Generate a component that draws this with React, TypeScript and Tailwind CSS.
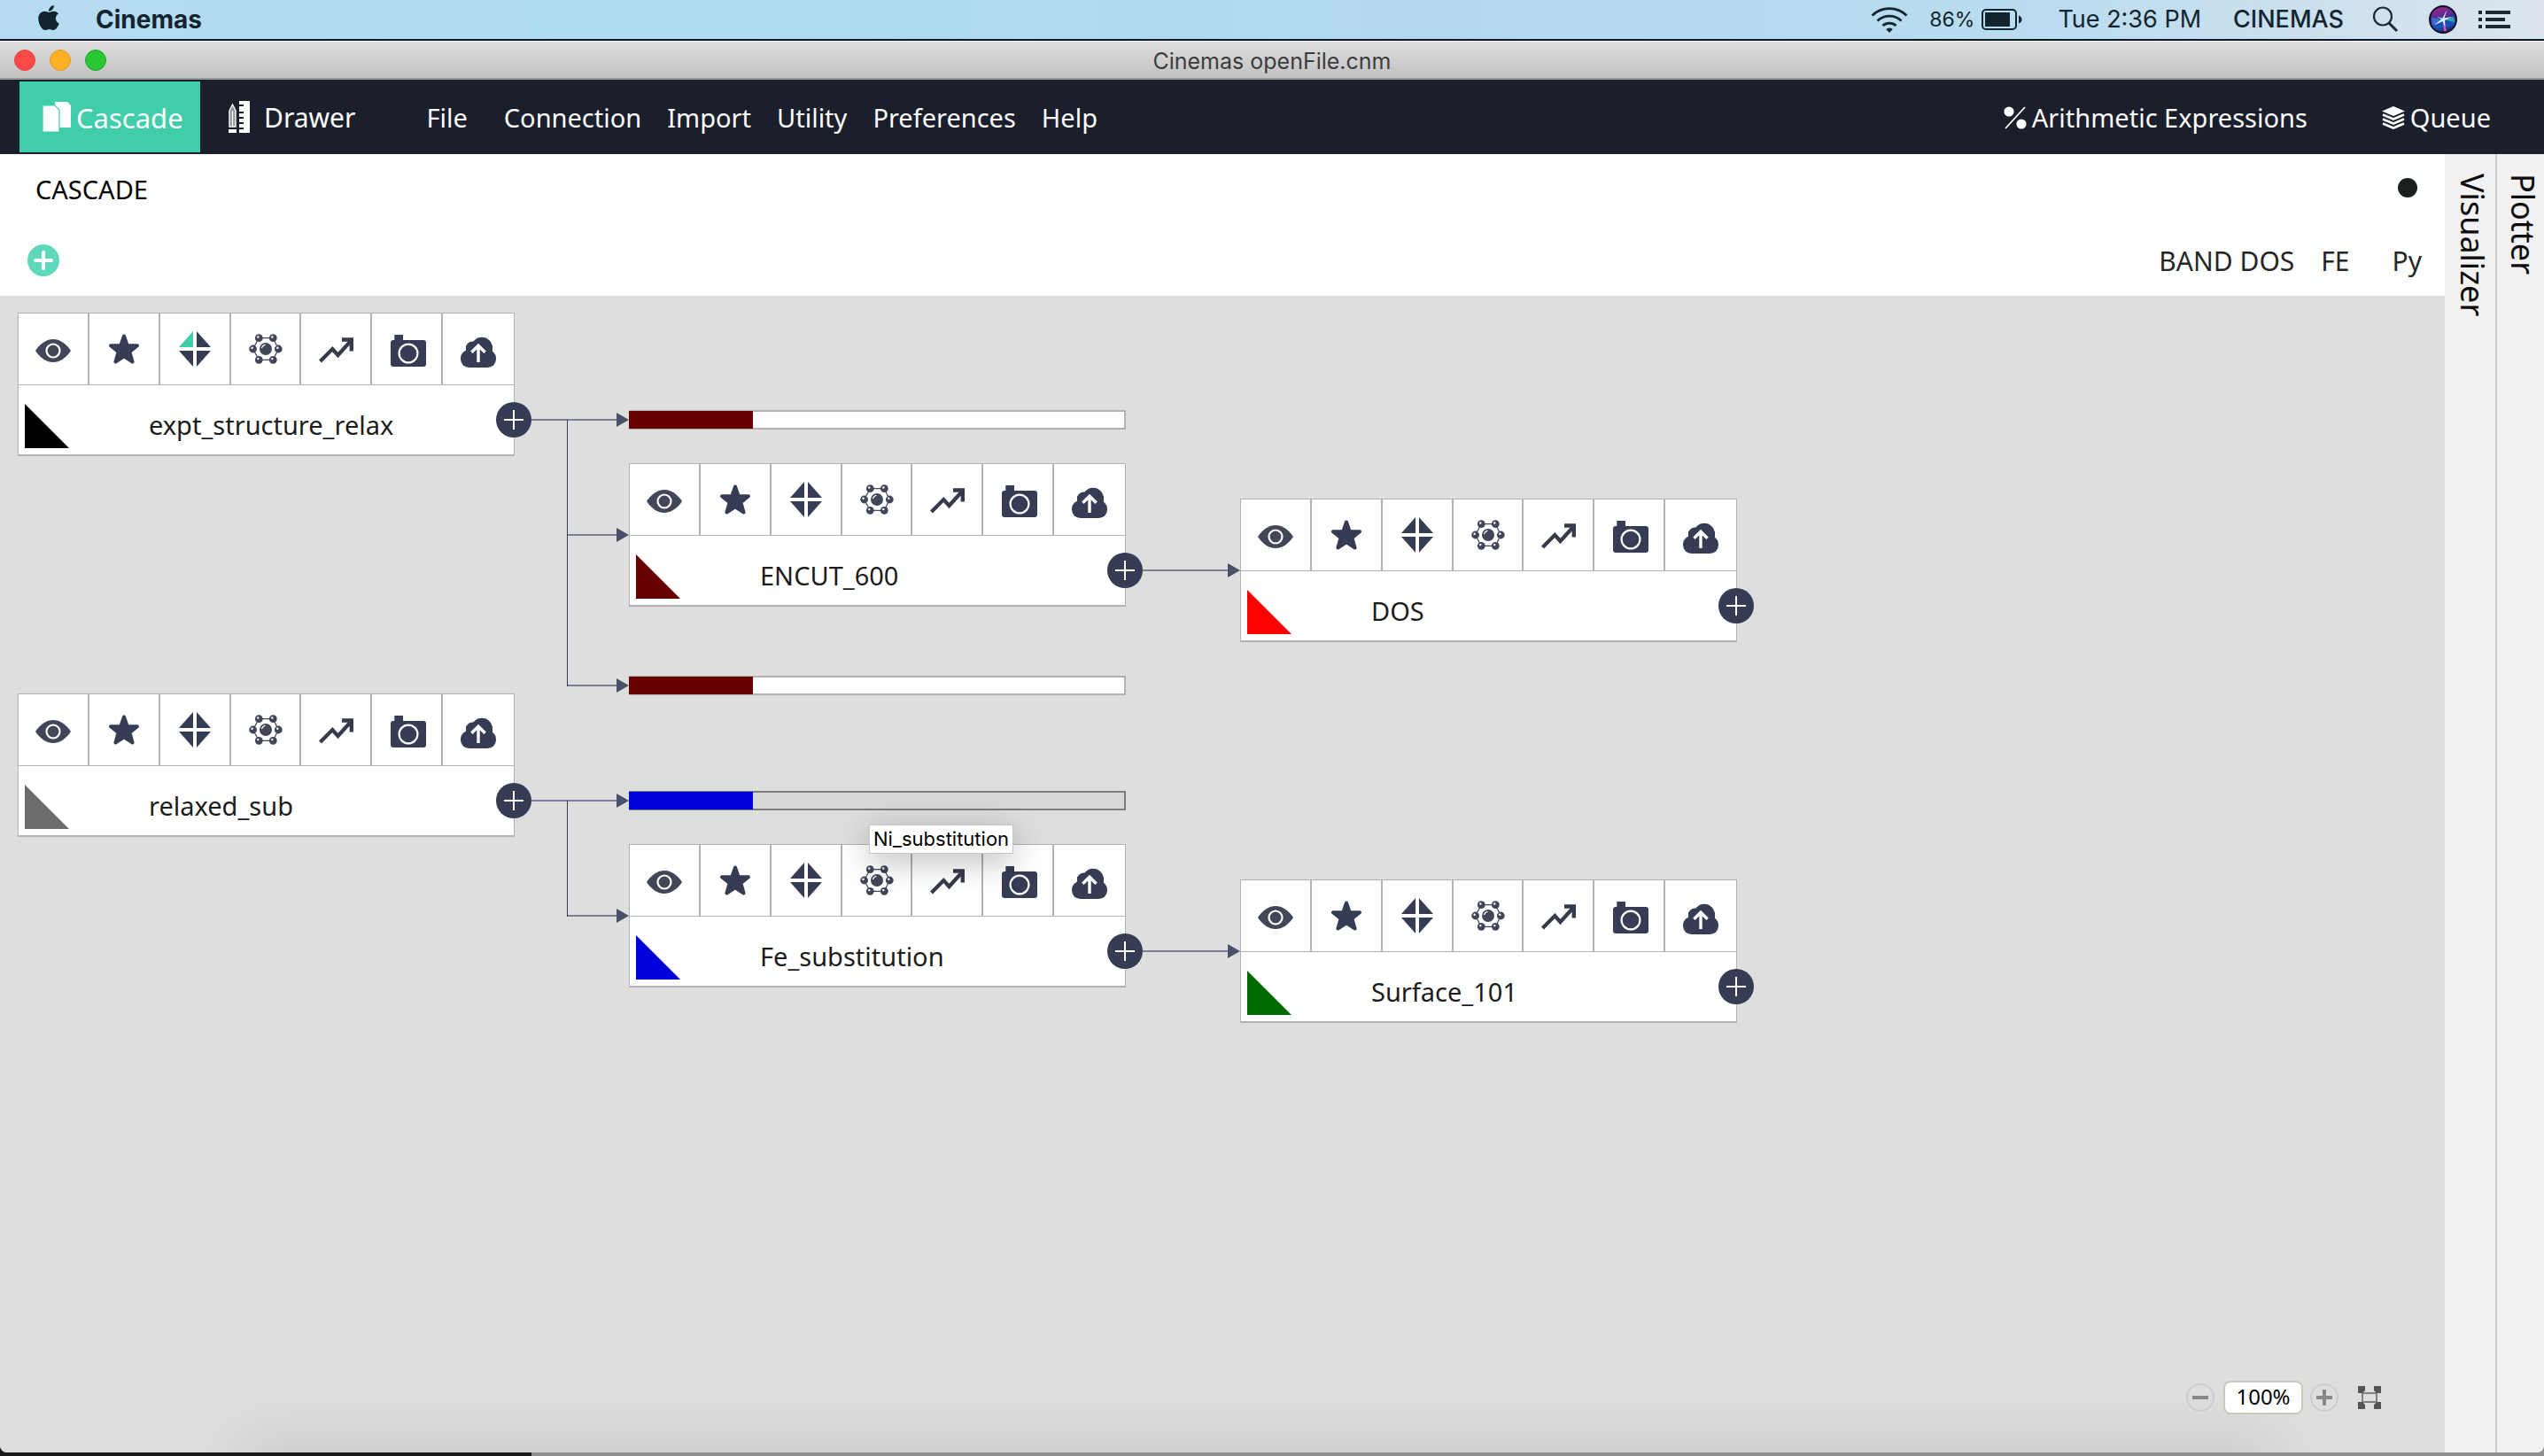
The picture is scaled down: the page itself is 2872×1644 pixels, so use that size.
import { useState } from "react";
import type { ReactNode } from "react";
import { FaApple } from "react-icons/fa";

const INK = "#373c55";

function EyeIcon() {
  return (
    <svg viewBox="0 0 80 80" className="size-full" aria-hidden="true">
      <path d="M20 42C26 33 33 29 40 29s14 4 20 13c-6 9-13 13-20 13S26 51 20 42Z" fill="#424659" />
      <circle cx="40" cy="42" r="7.5" fill="none" stroke="#fff" strokeWidth="2.2" />
    </svg>
  );
}

function StarIcon() {
  return (
    <svg viewBox="0 0 80 80" className="size-full" aria-hidden="true">
      <path
        d="M40 25.5 43.8 36.3 55 36.3 46.4 43.2 49.6 54.5 40 48.4 30.4 54.5 33.6 43.2 25 36.3 36.2 36.3Z"
        fill={INK}
        stroke={INK}
        strokeWidth="4"
        strokeLinejoin="round"
      />
    </svg>
  );
}

function DiamondIcon({ active }: { active?: boolean }) {
  return (
    <svg viewBox="0 0 80 80" className="size-full" aria-hidden="true">
      <path d="M38 20V38H22Z" fill={active ? "#40cdaa" : INK} />
      <path d="M42 20 58 38H42ZM22 42H38V60ZM42 42H58L42 60Z" fill={INK} />
    </svg>
  );
}

const atoms = [
  [32.3, 27.7],
  [48.3, 27.7],
  [54.3, 40],
  [48.3, 52.3],
  [32.3, 52.3],
  [25.6, 40],
];

function MoleculeIcon() {
  return (
    <svg viewBox="0 0 80 80" className="size-full" aria-hidden="true">
      <path d="M32.3 27.7H48.3L54.3 40 48.3 52.3H32.3L25.6 40Z" fill="none" stroke="#424659" strokeWidth="1.2" />
      <circle cx="40" cy="40" r="7" fill="#424659" />
      <path d="M35.6 38.6q1-2.6 3.4-3.2" stroke="#fff" strokeWidth="1.3" fill="none" strokeLinecap="round" />
      {atoms.map(([x, y]) => (
        <g key={`${x}-${y}`}>
          <circle cx={x} cy={y} r="4.4" fill="#424659" />
          <circle cx={x - 1} cy={y - 1.2} r="1.2" fill="#fff" />
        </g>
      ))}
    </svg>
  );
}

function TrendIcon() {
  return (
    <svg viewBox="0 0 80 80" className="size-full" aria-hidden="true">
      <path d="M22.5 54 36.3 40 42.5 47 57 31" fill="none" stroke="#363a4b" strokeWidth="4.2" />
      <path d="M47 27.3H60V42.6H55.6V31.8H47Z" fill="#363a4b" />
    </svg>
  );
}

function CameraIcon() {
  return (
    <svg viewBox="0 0 80 80" className="size-full" aria-hidden="true">
      <path d="M26.3 24H36V32H26.3Z" fill={INK} />
      <rect x="22" y="30" width="40" height="30" rx="3" fill={INK} />
      <circle cx="42" cy="45" r="10.4" fill="none" stroke="#fff" strokeWidth="2.2" />
    </svg>
  );
}

function CloudIcon() {
  return (
    <svg viewBox="0 0 80 80" className="size-full" aria-hidden="true">
      <rect x="20" y="41" width="40" height="20" rx="9.5" fill={INK} />
      <circle cx="33.5" cy="39" r="7.6" fill={INK} />
      <circle cx="44" cy="38.5" r="11.8" fill={INK} />
      <path d="M26 36H56V50H26Z" fill={INK} />
      <path d="M40 55V37M32.4 43.8 40 36.2 47.6 43.8" fill="none" stroke="#fff" strokeWidth="3.4" />
    </svg>
  );
}

function FilesIcon() {
  return (
    <svg viewBox="0 0 32 34" className="h-[34px] w-8" aria-hidden="true">
      <path d="M14 0H28L32 4V29H14Z" fill="#fff" />
      <path d="M0 4H14L19 9V34H0Z" fill="#fff" stroke="#40cdaa" strokeWidth="1.2" />
    </svg>
  );
}

function DrawerIcon() {
  return (
    <svg viewBox="0 0 24 36" className="h-9 w-6" aria-hidden="true">
      <path d="M12 0H24V36H12V32H17V30H12V26H17V24H12V20H17V18H12V14H17V12H12V6H17V4H12Z" fill="#fff" />
      <path d="M1 11 4.5 4 8 11V29H1Z" fill="#8d8f99" stroke="#fff" strokeWidth="1.4" />
      <path d="M4.5 11V28" stroke="#fff" strokeWidth="1.4" />
      <path d="M0 32H9V36H0Z" fill="#fff" />
    </svg>
  );
}

function PercentIcon() {
  return (
    <svg viewBox="0 0 26 26" className="size-[26px]" aria-hidden="true">
      <circle cx="6" cy="6" r="5.6" fill="#fff" />
      <circle cx="20" cy="20" r="5.6" fill="#fff" />
      <path d="M24 1 2 25" stroke="#fff" strokeWidth="1.8" />
    </svg>
  );
}

function LayersIcon() {
  return (
    <svg viewBox="0 0 26 26" className="size-[26px]" aria-hidden="true">
      <path d="M13 0 26 5.5 13 11 0 5.5Z" fill="#fff" />
      <path d="M1 9.5 13 14.5 25 9.5M1 14.5 13 19.5 25 14.5M1 19.5 13 24.5 25 19.5" fill="none" stroke="#fff" strokeWidth="2.6" />
    </svg>
  );
}

function WifiIcon() {
  return (
    <svg viewBox="0 0 42 30" className="h-[30px] w-[42px]" aria-hidden="true">
      <g fill="none" stroke="#12252f" strokeWidth="2.8">
        <path d="M1.5 10.5A28 28 0 0 1 40.5 10.5" />
        <path d="M7.5 16.5A19.5 19.5 0 0 1 34.5 16.5" />
        <path d="M13.5 22A11 11 0 0 1 28.5 22" />
      </g>
      <path d="M21 30 17.2 26A5.4 5.4 0 0 1 24.8 26Z" fill="#12252f" />
    </svg>
  );
}

function BatteryIcon() {
  return (
    <svg viewBox="0 0 46 24" className="h-6 w-[46px]" aria-hidden="true">
      <rect x="1" y="1" width="38" height="22" rx="4" fill="none" stroke="#12252f" strokeWidth="2" />
      <rect x="4" y="4" width="28" height="16" fill="#12252f" />
      <path d="M42 7.5Q45.5 9 45.5 12T42 16.5Z" fill="#12252f" />
    </svg>
  );
}

function SearchIcon() {
  return (
    <svg viewBox="0 0 30 30" className="size-[30px]" aria-hidden="true">
      <circle cx="12" cy="11.5" r="10" fill="none" stroke="#1c2a33" strokeWidth="2.2" />
      <path d="M19 19 28 28" stroke="#1c2a33" strokeWidth="3" />
    </svg>
  );
}

function AssistantIcon() {
  return (
    <svg viewBox="0 0 32 32" className="size-8" aria-hidden="true">
      <defs>
        <linearGradient id="orb" x1="0.3" y1="0" x2="0.6" y2="1">
          <stop offset="0" stopColor="#a6258f" />
          <stop offset="0.45" stopColor="#4a2c94" />
          <stop offset="0.75" stopColor="#1455c0" />
          <stop offset="1" stopColor="#2a1150" />
        </linearGradient>
      </defs>
      <circle cx="16" cy="16" r="15" fill="url(#orb)" stroke="#0c1024" strokeWidth="2" />
      <path d="M16 16 28 13 29 19Z" fill="#2fd0b4" opacity="0.7" />
      <path d="M16 16 20 29 17 29Z" fill="#f04fb0" />
      <path d="M3 14 16 16 4 23Z" fill="#2f8cf0" opacity="0.7" />
      <path d="M20.5 5 17.5 14.5 26 13 18 16.8 18.5 25 15.5 18 6 22.5 14.5 15.5 9 13 15.5 14.5Z" fill="#d9fbff" />
    </svg>
  );
}

function ListIcon() {
  return (
    <svg viewBox="0 0 36 20" className="h-5 w-9" aria-hidden="true">
      <path d="M0 0H4V4H0ZM8 0H36V4H8ZM0 8H4V12H0ZM8 8H30V12H8ZM0 16H4V20H0ZM8 16H36V20H8Z" fill="#1c2a33" />
    </svg>
  );
}

function FitIcon() {
  return (
    <svg viewBox="0 0 26 26" className="size-[26px]" aria-hidden="true">
      <path d="M5 8H21M5 18H21M5 5V21M21 5V21" fill="none" stroke="#808080" strokeWidth="2" />
      <path d="M0 0H8V5L5 8H0ZM26 0V8H21L18 5V0ZM0 26V18H5L8 21V26ZM26 26H18V21L21 18H26Z" fill="#545454" />
    </svg>
  );
}

function PlusBadge() {
  return (
    <svg viewBox="0 0 40 40" className="size-full" aria-hidden="true">
      <circle cx="20" cy="20" r="20" fill={INK} />
      <path d="M9 20H31M20 9V31" stroke="#fff" strokeWidth="2" />
    </svg>
  );
}

type NodeProps = { name: string; color: string; place: string; active?: boolean };

function NodeCard({ name, color, place, active }: NodeProps) {
  const tools: [string, ReactNode][] = [
    ["View", <EyeIcon />],
    ["Favourite", <StarIcon />],
    ["Cell", <DiamondIcon active={active} />],
    ["Structure", <MoleculeIcon />],
    ["Plot", <TrendIcon />],
    ["Snapshot", <CameraIcon />],
    ["Upload", <CloudIcon />],
  ];
  return (
    <article className={`absolute w-[561px] border border-b-2 border-[#b1b3b3] bg-white ${place}`}>
      <div className="grid grid-cols-7 divide-x-2 divide-[#b1b3b3] border-b border-[#b1b3b3]">
        {tools.map(([label, icon]) => (
          <button key={label} aria-label={`${label} ${name}`} className="flex h-20 justify-center">
            <span className="size-20 shrink-0">{icon}</span>
          </button>
        ))}
      </div>
      <div className="flex h-[78px] items-end gap-[90px] pb-[7px] pl-[7px]">
        <svg viewBox="0 0 50 50" className="size-[50px]" aria-hidden="true">
          <path d="M0 0 50 50H0Z" fill={color} />
        </svg>
        <h2 className="pb-[6px] text-[29px] leading-10 text-[#1c1c1c]">{name}</h2>
      </div>
      <button aria-label={`Add step after ${name}`} className="absolute -right-5 top-[100px] size-10">
        <PlusBadge />
      </button>
    </article>
  );
}

type BarProps = { name: string; place: string; fill: string; hovered?: boolean };

function CollapsedNode({ name, place, fill, hovered }: BarProps) {
  return (
    <button
      aria-label={name}
      className={`absolute flex h-[22px] w-[561px] border-y-2 border-r-2 ${
        hovered ? "border-[#7d7d7d] bg-[#d8d8d8]" : "border-[#b1b3b3] bg-white"
      } ${place}`}
    >
      <span className={`-my-px h-5 w-1/4 ${fill}`} />
    </button>
  );
}

function Connectors() {
  const arrows = [
    [600, 474, 710],
    [640, 604, 710],
    [640, 774, 710],
    [600, 904, 710],
    [640, 1034, 710],
    [1290, 644, 1400],
    [1290, 1074, 1400],
  ];
  return (
    <svg viewBox="0 334 1400 800" className="absolute left-0 top-0 h-[800px] w-[1400px]" aria-hidden="true">
      {arrows.map(([x1, y, x2]) => (
        <g key={`${x1}-${y}`}>
          <path d={`M${x1} ${y}H${x2 - 12}`} stroke="#7c8096" strokeWidth="2" />
          <path d={`M${x2 - 14} ${y - 8}L${x2} ${y}L${x2 - 14} ${y + 8}Z`} fill="#4b5069" />
        </g>
      ))}
      <path d="M640.5 474V775M640.5 904V1035" stroke="#373c55" strokeWidth="1" />
    </svg>
  );
}

const menus = ["Connection", "Import", "Utility", "Preferences", "Help"];

export default function App() {
  const [zoom, setZoom] = useState("100%");
  return (
    <div className="flex min-h-screen flex-col bg-[linear-gradient(to_right,#18191a_600px,#8f8f8f_600px)] font-['Noto_Sans',sans-serif] text-[29px] leading-9">
      <header className="flex h-[46px] items-center border-b-2 border-[#0b1722] bg-[linear-gradient(to_right,#b6dcf1,#addbf0_30%,#b3d8ef_60%,#b9dcf0_80%,#dbe4ec)] pl-[42px] pr-[38px] font-['Inter',sans-serif] text-[#12252f]">
        <FaApple className="-mt-1 h-8 w-[26px]" />
        <strong className="ml-10 text-[28px] font-bold">Cinemas</strong>
        <div className="ml-auto flex items-center text-[27px]">
          <WifiIcon />
          <span className="ml-6 text-[23px]">86%</span>
          <span className="ml-2">
            <BatteryIcon />
          </span>
          <span className="ml-10">Tue 2:36 PM</span>
          <span className="ml-9 font-medium">CINEMAS</span>
          <span className="ml-8">
            <SearchIcon />
          </span>
          <span className="ml-[34px]">
            <AssistantIcon />
          </span>
          <span className="ml-6">
            <ListIcon />
          </span>
        </div>
      </header>

      <div className="mb-1 flex flex-1 flex-col overflow-hidden rounded-b-lg bg-[#dedede]">
        <div className="grid h-11 grid-cols-[1fr_auto_1fr] items-center border-b-2 border-t border-b-[#979997] border-t-[#f3f3f3] bg-linear-to-b from-[#dedede] to-[#c2c2c2] px-4">
          <div className="flex gap-4">
            <button aria-label="Close" className="size-6 rounded-full border border-[#e0433f] bg-[#fc4a48]" />
            <button aria-label="Minimize" className="size-6 rounded-full border border-[#dd9a22] bg-[#fdb125]" />
            <button aria-label="Full screen" className="size-6 rounded-full border border-[#1ea62b] bg-[#29c732]" />
          </div>
          <h1 className="pt-[2px] font-['Inter',sans-serif] text-[25px] text-[#3c3c3c]">Cinemas openFile.cnm</h1>
        </div>

        <nav className="flex h-[84px] items-center bg-[#1b1e2b] pl-[22px] pr-[60px] text-white">
          <button className="flex h-20 w-[204px] items-center gap-[6px] bg-[#40cdaa] pl-[26px] text-[31px]">
            <FilesIcon />
            <span className="pt-px">Cascade</span>
          </button>
          <button className="ml-8 flex items-center gap-4 text-[30px]">
            <DrawerIcon />
            <span className="pt-px">Drawer</span>
          </button>
          <div className="ml-20 flex gap-[29px] pt-px text-shadow-[0_2px_1px_rgba(255,255,255,0.35)]">
            <button className="mr-3">File</button>
            {menus.map((m) => (
              <button key={m}>{m}</button>
            ))}
          </div>
          <div className="ml-auto flex gap-[84px] pt-px text-shadow-[0_2px_1px_rgba(255,255,255,0.35)]">
            <button className="flex items-center gap-[6px]">
              <PercentIcon />
              Arithmetic Expressions
            </button>
            <button className="flex items-center gap-[6px]">
              <LayersIcon />
              Queue
            </button>
          </div>
        </nav>

        <div className="flex flex-1">
          <main className="flex flex-1 flex-col">
            <section className="flex h-40 flex-col justify-between bg-white pb-5 pl-[31px] pr-[26px] pt-5">
              <div className="flex h-10 items-center justify-between pl-[9px] pr-[5px]">
                <h2 className="text-black">CASCADE</h2>
                <button aria-label="Status" className="mb-1 size-[22px] rounded-full bg-[#1b1f20]" />
              </div>
              <div className="flex h-10 items-center">
                <button aria-label="Add structure" className="size-9">
                  <svg viewBox="0 0 36 36" className="size-full" aria-hidden="true">
                    <circle cx="18" cy="18" r="18" fill="#5ed7bb" />
                    <path d="M9 18H27M18 9V27" stroke="#fff" strokeWidth="4" strokeLinecap="round" />
                  </svg>
                </button>
                <div className="ml-auto flex pt-px text-[30px] text-[#262626]">
                  <button>BAND DOS</button>
                  <button className="ml-[30px]">FE</button>
                  <button className="ml-12">Py</button>
                </div>
              </div>
            </section>

            <section className="relative flex flex-1 flex-col justify-end overflow-hidden bg-[#dedede]">
              <div className="absolute inset-x-0 -bottom-10 ml-[280px] mr-[200px] h-10 shadow-[0_0_70px_6px_rgba(0,0,0,0.13)]" />
              <Connectors />
              <NodeCard name="expt_structure_relax" color="#000000" place="left-5 top-[19px]" active />
              <CollapsedNode name="Collapsed step 1" place="left-[710px] top-[129px]" fill="bg-[#670000]" />
              <NodeCard name="ENCUT_600" color="#670000" place="left-[710px] top-[189px]" />
              <NodeCard name="DOS" color="#ff0000" place="left-[1400px] top-[229px]" />
              <CollapsedNode name="Collapsed step 2" place="left-[710px] top-[429px]" fill="bg-[#670000]" />
              <NodeCard name="relaxed_sub" color="#6c6c6c" place="left-5 top-[449px]" />
              <CollapsedNode name="Ni_substitution" place="left-[710px] top-[559px]" fill="bg-[#0000d8]" hovered />
              <NodeCard name="Fe_substitution" color="#0000d8" place="left-[710px] top-[619px]" />
              <NodeCard name="Surface_101" color="#006a00" place="left-[1400px] top-[659px]" />
              <div
                role="tooltip"
                className="absolute left-[981px] top-[597px] border border-[#c8c8c8] bg-white px-1 font-['Inter',sans-serif] text-[22px] leading-[31px] text-black shadow-[0_8px_36px_rgba(0,0,0,0.28)]"
              >
                Ni_substitution
              </div>

              <div className="relative flex items-center self-end pb-[43px] pr-[72px]">
                <button aria-label="Zoom out" className="size-8">
                  <svg viewBox="0 0 32 32" className="size-full" aria-hidden="true">
                    <circle cx="16" cy="16" r="15" fill="none" stroke="#cccccc" strokeWidth="2" />
                    <path d="M7 16H25" stroke="#888888" strokeWidth="4" />
                  </svg>
                </button>
                <input
                  aria-label="Zoom level"
                  value={zoom}
                  onChange={(e) => setZoom(e.target.value)}
                  className="ml-[10px] h-[38px] w-[90px] rounded-lg border-2 border-[#c9c9c0] bg-white pb-1 text-center text-[24px] text-black"
                />
                <button aria-label="Zoom in" className="ml-2 size-8">
                  <svg viewBox="0 0 32 32" className="size-full" aria-hidden="true">
                    <circle cx="16" cy="16" r="15" fill="none" stroke="#cccccc" strokeWidth="2" />
                    <path d="M7 16H25M16 7V25" stroke="#888888" strokeWidth="4" />
                  </svg>
                </button>
                <button aria-label="Fit to window" className="ml-[22px]">
                  <FitIcon />
                </button>
              </div>
            </section>
          </main>

          <aside className="flex bg-[#f1f1f1] text-[36px] leading-10 text-[#0c0c0c]">
            <button className="flex w-[59px] items-center justify-start border-r-2 border-[#cccccc] pl-1 pt-[22px] [writing-mode:vertical-rl]">
              Visualizer
            </button>
            <button className="flex w-[53px] items-center justify-start pl-1 pt-[22px] [writing-mode:vertical-rl]">
              Plotter
            </button>
          </aside>
        </div>
      </div>
    </div>
  );
}
